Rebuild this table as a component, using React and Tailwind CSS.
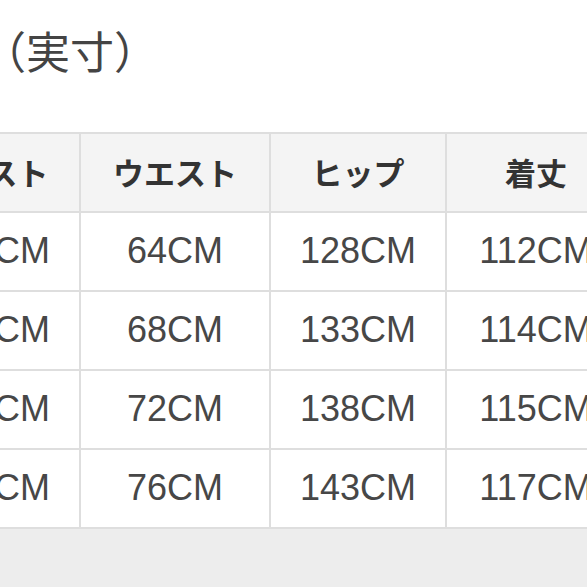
import React from "react";

const header = ["バスト", "ウエスト", "ヒップ", "着丈"];
const rows = [
  ["84CM", "64CM", "128CM", "112CM"],
  ["88CM", "68CM", "133CM", "114CM"],
  ["92CM", "72CM", "138CM", "115CM"],
  ["96CM", "76CM", "143CM", "117CM"],
];

const jp = { fontFamily: '"Noto Sans CJK JP", "Noto Sans", sans-serif' };
const num = { fontFamily: '"Liberation Sans", Arial, sans-serif' };

export default function App() {
  return (
    <div className="w-[587px] h-[587px] overflow-hidden bg-white flex flex-col">
      <div className="h-[132px] shrink-0 pt-[28px]">
        <div className="ml-[-18px] text-[44px] leading-[44px] text-[#444]" style={jp}>
          （実寸）
        </div>
      </div>
      <div className="shrink-0 ml-[-75px] w-max grid grid-cols-[154px_188px_174px_178px] gap-[2px] py-[2px] bg-[#dedede]">
        {header.map((h) => (
          <div
            key={h}
            className="h-[77px] bg-[#f4f4f4] flex items-center justify-center text-[31px] font-bold text-[#333]"
            style={jp}
          >
            {h}
          </div>
        ))}
        {rows.map((r, i) =>
          r.map((v, j) => (
            <div
              key={i + "-" + j}
              className="h-[77px] bg-white flex items-center justify-center text-[36px] text-[#474747] pb-[2px]"
              style={num}
            >
              {v}
            </div>
          ))
        )}
      </div>
      <div className="flex-1 bg-[#ededed]" />
    </div>
  );
}
